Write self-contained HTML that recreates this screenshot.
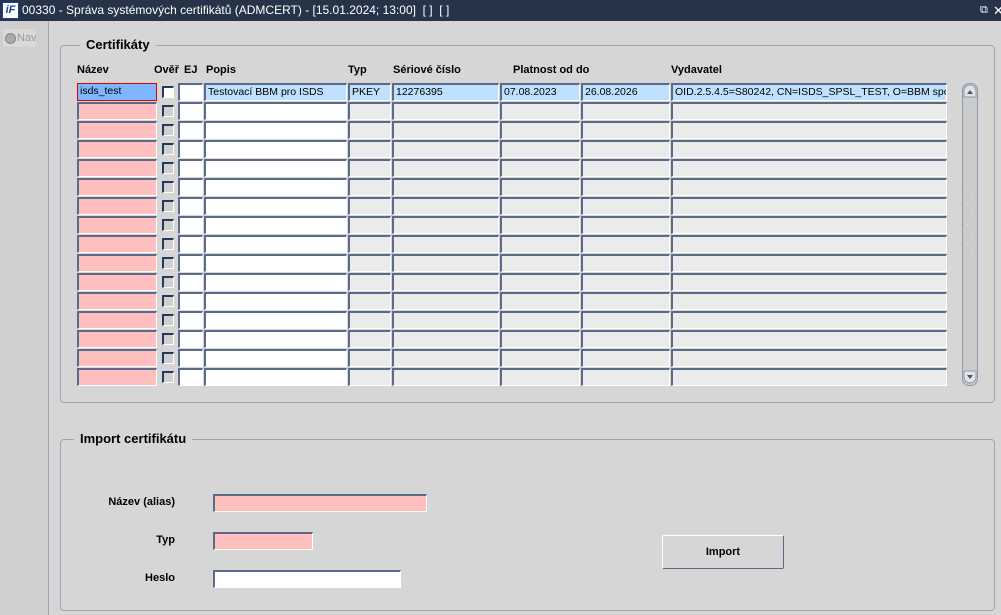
<!DOCTYPE html>
<html><head><meta charset="utf-8"><style>
*{box-sizing:border-box;margin:0;padding:0}
body{width:1001px;height:615px;background:#d6d6d6;font-family:"Liberation Sans",Arial,sans-serif;font-size:11px;color:#000;position:relative;overflow:hidden}
.tb{position:absolute;left:0;top:0;width:1001px;height:21px;background:#263449;color:#fff;font-size:12px;line-height:21px}
.tb .logo{position:absolute;left:2px;top:2px;width:17px;height:17px;background:#fff;border:1px solid #1a3caa;color:#1a3caa;font:bold italic 11px/15px "Liberation Sans",sans-serif;text-align:center}
.tb .tt{position:absolute;left:22px;top:0}
.lp{position:absolute;left:0;top:21px;width:49px;height:594px;background:#cfcfcf;border-right:1px solid #9aa5b5}
.nav{position:absolute;left:3px;top:8px;width:33px;height:18px;background:#d9d9d9;color:#9a9a9a;font-size:11px;line-height:18px;padding-left:14px}
.nav:before{content:"";position:absolute;left:2px;top:4px;width:9px;height:9px;border-radius:50%;background:#aaa;border:1px solid #888}
.fr{position:absolute;border:1px solid #9aa5b5;border-radius:4px}
.ft{position:absolute;background:#d6d6d6;font-weight:bold;font-size:13px;padding:0 6px}
.h{position:absolute;top:64px;font-weight:bold;font-size:11px}
.r{position:absolute;left:0;width:1001px;height:19px}
.r i{position:absolute;top:0;height:18px;border-top:2px solid #5a6a88;border-left:2px solid #5a6a88;border-right:1px solid #fff;border-bottom:1px solid #fff;background:#ebebeb;font-style:normal;font-size:10.5px;line-height:15px;padding-left:2px;white-space:nowrap;overflow:hidden}
.r .n{left:77px;width:80px;background:#ffbfbf}
.r .c{left:162px;top:3px;width:12px;height:12px;border:1px solid #fff;border-top:2px solid #253a5a;border-left:2px solid #253a5a;background:#d0d0d0}
.r .e{left:178px;width:25px;background:#fff}
.r .p{left:204px;width:143px;background:#fff}
.r .t{left:348px;width:43px}
.r .s{left:392px;width:107px}
.r .o{left:500px;width:80px}
.r .d{left:581px;width:89px}
.r .v{left:671px;width:276px}
.r1 i{background:#bfe0ff!important}
.r1 .e{background:#fff!important}
.r1 .n{background:#7fb6ff!important;border:1px solid #e00000;outline:1px solid #e00000;outline-offset:-1px}
.r1 .c{background:#fff!important}
.sb{position:absolute;left:962px;top:83px;width:16px;height:303px;background:#ccc;border-radius:7px;border:1px solid #8a9ab0}
.lbl{position:absolute;font-weight:bold;font-size:11px;text-align:right;width:120px}
.in{position:absolute;height:18px;border-top:2px solid #5a6a88;border-left:2px solid #5a6a88;border-right:1px solid #fff;border-bottom:1px solid #fff}
.btn{position:absolute;left:662px;top:535px;width:122px;height:34px;border:1px solid #fff;border-right:1px solid #5a6a88;border-bottom:1px solid #5a6a88;border-radius:2px;text-align:center;line-height:32px;font-weight:bold;font-size:11px}
</style></head><body>
<div class="tb"><div class="logo">iF</div><div class="tt">00330 - Správa systémových certifikátů (ADMCERT) - [15.01.2024; 13:00]&nbsp; [ ]&nbsp; [ ]</div>
<div style="position:absolute;left:980px;top:0;font-size:11px">&#x29C9;</div><div style="position:absolute;left:993px;top:0;font-size:13px">✕</div></div>
<div class="lp"><div class="nav">Nav</div></div>

<div class="fr" style="left:60px;top:45px;width:935px;height:358px"></div>
<div class="ft" style="left:80px;top:37px">Certifikáty</div>
<div class="h" style="left:77px">Název</div>
<div class="h" style="left:154px">Ověř</div>
<div class="h" style="left:184px">EJ</div>
<div class="h" style="left:206px">Popis</div>
<div class="h" style="left:348px">Typ</div>
<div class="h" style="left:393px">Sériové číslo</div>
<div class="h" style="left:513px">Platnost od do</div>
<div class="h" style="left:671px">Vydavatel</div>

<div class="r r1" style="top:83px"><i class="n">isds_test</i><i class="c"></i><i class="e"></i><i class="p">Testovací BBM pro ISDS</i><i class="t">PKEY</i><i class="s">12276395</i><i class="o">07.08.2023</i><i class="d">26.08.2026</i><i class="v">OID.2.5.4.5=S80242, CN=ISDS_SPSL_TEST, O=BBM spol</i></div>
<div class="r" style="top:102px"><i class="n"></i><i class="c"></i><i class="e"></i><i class="p"></i><i class="t"></i><i class="s"></i><i class="o"></i><i class="d"></i><i class="v"></i></div>
<div class="r" style="top:121px"><i class="n"></i><i class="c"></i><i class="e"></i><i class="p"></i><i class="t"></i><i class="s"></i><i class="o"></i><i class="d"></i><i class="v"></i></div>
<div class="r" style="top:140px"><i class="n"></i><i class="c"></i><i class="e"></i><i class="p"></i><i class="t"></i><i class="s"></i><i class="o"></i><i class="d"></i><i class="v"></i></div>
<div class="r" style="top:159px"><i class="n"></i><i class="c"></i><i class="e"></i><i class="p"></i><i class="t"></i><i class="s"></i><i class="o"></i><i class="d"></i><i class="v"></i></div>
<div class="r" style="top:178px"><i class="n"></i><i class="c"></i><i class="e"></i><i class="p"></i><i class="t"></i><i class="s"></i><i class="o"></i><i class="d"></i><i class="v"></i></div>
<div class="r" style="top:197px"><i class="n"></i><i class="c"></i><i class="e"></i><i class="p"></i><i class="t"></i><i class="s"></i><i class="o"></i><i class="d"></i><i class="v"></i></div>
<div class="r" style="top:216px"><i class="n"></i><i class="c"></i><i class="e"></i><i class="p"></i><i class="t"></i><i class="s"></i><i class="o"></i><i class="d"></i><i class="v"></i></div>
<div class="r" style="top:235px"><i class="n"></i><i class="c"></i><i class="e"></i><i class="p"></i><i class="t"></i><i class="s"></i><i class="o"></i><i class="d"></i><i class="v"></i></div>
<div class="r" style="top:254px"><i class="n"></i><i class="c"></i><i class="e"></i><i class="p"></i><i class="t"></i><i class="s"></i><i class="o"></i><i class="d"></i><i class="v"></i></div>
<div class="r" style="top:273px"><i class="n"></i><i class="c"></i><i class="e"></i><i class="p"></i><i class="t"></i><i class="s"></i><i class="o"></i><i class="d"></i><i class="v"></i></div>
<div class="r" style="top:292px"><i class="n"></i><i class="c"></i><i class="e"></i><i class="p"></i><i class="t"></i><i class="s"></i><i class="o"></i><i class="d"></i><i class="v"></i></div>
<div class="r" style="top:311px"><i class="n"></i><i class="c"></i><i class="e"></i><i class="p"></i><i class="t"></i><i class="s"></i><i class="o"></i><i class="d"></i><i class="v"></i></div>
<div class="r" style="top:330px"><i class="n"></i><i class="c"></i><i class="e"></i><i class="p"></i><i class="t"></i><i class="s"></i><i class="o"></i><i class="d"></i><i class="v"></i></div>
<div class="r" style="top:349px"><i class="n"></i><i class="c"></i><i class="e"></i><i class="p"></i><i class="t"></i><i class="s"></i><i class="o"></i><i class="d"></i><i class="v"></i></div>
<div class="r" style="top:368px"><i class="n"></i><i class="c"></i><i class="e"></i><i class="p"></i><i class="t"></i><i class="s"></i><i class="o"></i><i class="d"></i><i class="v"></i></div>

<div class="sb">
<svg width="14" height="301" style="position:absolute;left:0;top:0">
<path d="M1 13 V7 a6 6 0 0 1 12 0 V13 Z" fill="#e4e4e4" stroke="#8a9ab0"/>
<path d="M4 10 L7 6 L10 10 Z" fill="#44546e"/>
<path d="M1 287 V293 a6 6 0 0 0 12 0 V287 Z" fill="#e4e4e4" stroke="#8a9ab0"/>
<path d="M4 291 L7 295 L10 291 Z" fill="#44546e"/>
<g fill="#eee"><rect x="4" y="105" width="1" height="1"/><rect x="8" y="110" width="1" height="1"/><rect x="4" y="120" width="1" height="1"/><rect x="8" y="130" width="1" height="1"/><rect x="4" y="140" width="1" height="1"/><rect x="8" y="150" width="1" height="1"/><rect x="4" y="160" width="1" height="1"/><rect x="8" y="170" width="1" height="1"/></g>
</svg></div>

<div class="fr" style="left:60px;top:439px;width:935px;height:172px"></div>
<div class="ft" style="left:74px;top:431px">Import certifikátu</div>
<div class="lbl" style="left:55px;top:496px">Název (alias)</div>
<div class="in" style="left:213px;top:494px;width:214px;background:#ffbfbf"></div>
<div class="lbl" style="left:55px;top:534px">Typ</div>
<div class="in" style="left:213px;top:532px;width:100px;background:#ffbfbf"></div>
<div class="lbl" style="left:55px;top:572px">Heslo</div>
<div class="in" style="left:213px;top:570px;width:188px;background:#fff"></div>
<div class="btn">Import</div>
</body></html>
